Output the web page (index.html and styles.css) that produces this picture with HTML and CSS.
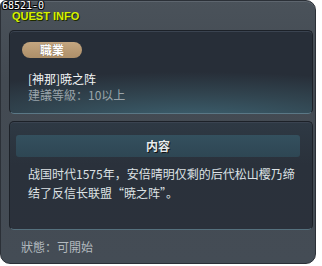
FILE: index.html
```html
<!DOCTYPE html>
<html lang="zh">
<head>
    <meta charset="UTF-8">
    <title>Quest Info</title>
    <link rel="stylesheet" href="styles.css">
</head>
<body>
    <div class="Window">
        <div class="QuestId">68521-0</div>
        <div class="Title">QUEST INFO</div>
        <div class="Panel JobPanel">
            <div class="Badge">職業</div>
            <div class="QuestName">[神那]暁之阵</div>
            <div class="QuestLevel">建議等級：10以上</div>
        </div>
        <div class="Panel ContentPanel">
            <div class="Header">内容</div>
            <div class="Desc">战国时代1575年，安倍晴明仅剩的后代松山樱乃缔结了反信长联盟“暁之阵”。</div>
        </div>
        <div class="Status">狀態：可開始</div>
    </div>
</body>
</html>
```

FILE: styles.css
```css
body, html {
    margin: 0;
    background-color: #fff;
    font-family: "Noto Sans CJK SC", "Liberation Sans", sans-serif;
    font-size: 12px;
}

.Window {
    width: 314px;
    height: 262px;
    border: 1px solid #2b3037;
    border-radius: 6px 10px 10px 10px;
    background: linear-gradient(#4a525a, #434a52 30%, #444c55);
    box-shadow: inset 0 1px 0 #5d656e;
    display: flex;
    flex-direction: column;
    overflow: hidden;
}

.QuestId {
    font-family: "DejaVu Sans Mono", monospace;
    font-size: 10px;
    line-height: 10px;
    height: 10px;
    padding-left: 1px;
    color: #fff;
    text-shadow: -1px -1px 0 #000, 1px -1px 0 #000, -1px 1px 0 #000, 1px 1px 0 #000;
}

.Title {
    font-family: "Liberation Sans", sans-serif;
    font-weight: bold;
    font-size: 11px;
    line-height: 11px;
    height: 19px;
    padding-left: 11px;
    color: #d6f200;
    text-shadow: 1px 1px 0 #1e2a00;
}

.Panel {
    box-sizing: border-box;
    margin-left: 8px;
    width: 304px;
    border: 1px solid #1c2128;
    border-radius: 5px;
    box-shadow: inset 0 1px 0 #3a4350;
}

.JobPanel {
    height: 84px;
    padding: 11px 0 0 12px;
    background: radial-gradient(ellipse 130% 75% at 60% 110%, #3d6271, #31444f 45%, #272e38 80%);
    border-bottom-color: #5b7886;
}

.Badge {
    width: 60px;
    height: 16px;
    border-radius: 8px;
    background: linear-gradient(#c4a680, #ad8f69);
    color: #fff;
    font-weight: bold;
    font-size: 12px;
    line-height: 16px;
    text-align: center;
    text-shadow: 0 0 1px #5a4630;
}

.QuestName {
    margin: 13px 0 0 6px;
    color: #f2f4f5;
    line-height: 16px;
}

.QuestLevel {
    margin-left: 6px;
    color: #9aa4aa;
    line-height: 16px;
}

.ContentPanel {
    margin-top: 7px;
    height: 109px;
    padding: 13px 12px 0 6px;
    background: linear-gradient(#2e3944, #2a313b 40%, #2b313b);
    border-bottom-color: #55707d;
}

.Header {
    height: 22px;
    border-radius: 3px;
    background: linear-gradient(#34505e, #2e4653);
    color: #e6eaec;
    font-weight: bold;
    line-height: 22px;
    text-align: center;
    text-shadow: 1px 1px 0 #111;
}

.Desc {
    margin: 7px 0 0 12px;
    color: #dde2e5;
    line-height: 19px;
}

.Status {
    margin: 9px 0 0 20px;
    color: #b3babf;
    line-height: 16px;
}
```
